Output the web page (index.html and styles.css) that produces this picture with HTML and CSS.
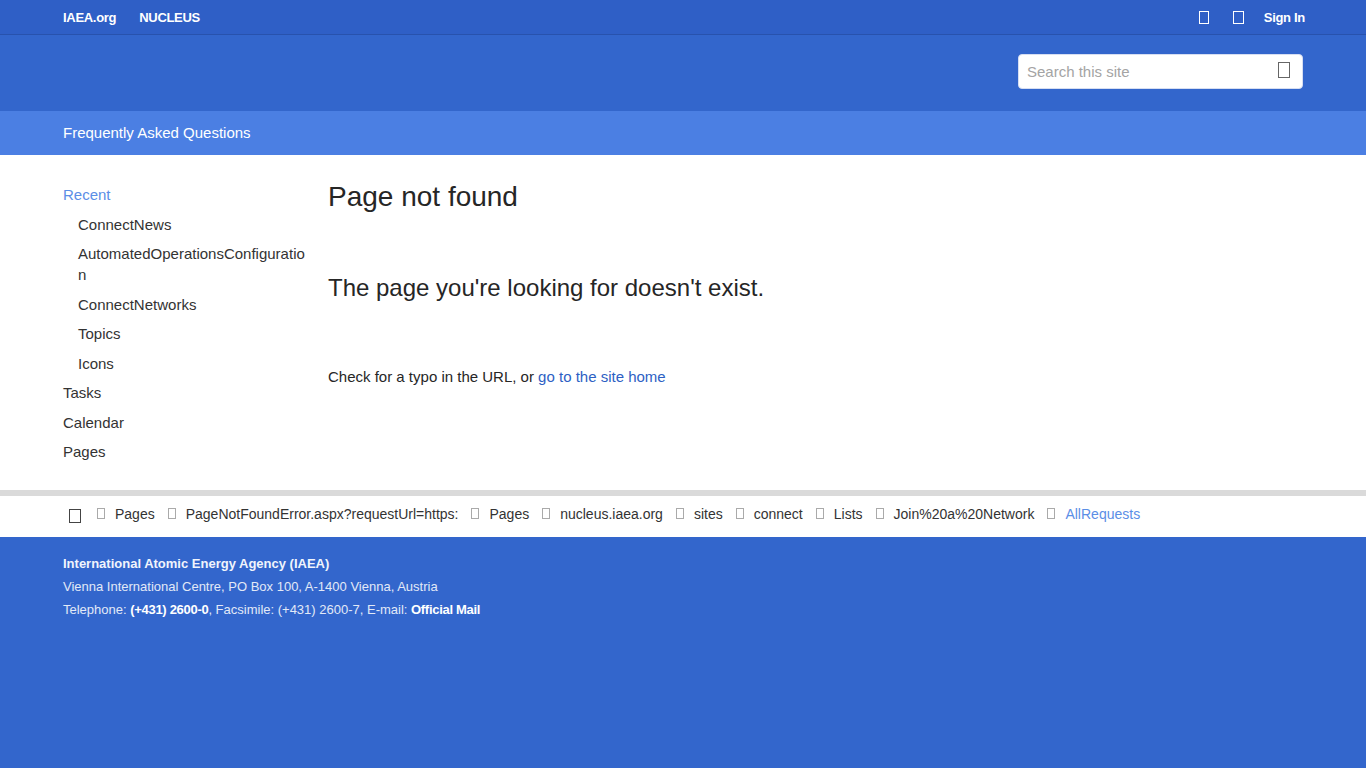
FILE: index.html
```html
<!DOCTYPE html>
<html lang="en">
<head>
<meta charset="utf-8">
<title>Page not found</title>
<link rel="stylesheet" href="styles.css">
</head>
<body>
<div class="topbar">
  <div class="container topbar-inner">
    <div class="toplinks">
      <a href="#">IAEA.org</a>
      <a href="#">NUCLEUS</a>
    </div>
    <div class="topright">
      <span class="tofu tofu-top"></span>
      <span class="tofu tofu-top tofu-wide"></span>
      <a href="#">Sign In</a>
    </div>
  </div>
</div>
<header class="header">
  <div class="container header-inner">
    <div class="search">
      <span class="placeholder">Search this site</span>
      <span class="tofu tofu-search"></span>
    </div>
  </div>
</header>
<nav class="navbar">
  <div class="container">
    <a href="#" class="navlink">Frequently Asked Questions</a>
  </div>
</nav>
<div class="content-wrap">
  <main class="container content">
    <aside class="sidebar">
      <a href="#" class="side-item active">Recent</a>
      <a href="#" class="side-item sub">ConnectNews</a>
      <a href="#" class="side-item sub">AutomatedOperationsConfiguration</a>
      <a href="#" class="side-item sub">ConnectNetworks</a>
      <a href="#" class="side-item sub">Topics</a>
      <a href="#" class="side-item sub">Icons</a>
      <a href="#" class="side-item">Tasks</a>
      <a href="#" class="side-item">Calendar</a>
      <a href="#" class="side-item">Pages</a>
    </aside>
    <section class="main">
      <h1>Page not found</h1>
      <h2>The page you're looking for doesn't exist.</h2>
      <p>Check for a typo in the URL, or <a href="#">go to the site home</a></p>
    </section>
  </main>
</div>
<div class="crumbs">
  <div class="container crumbs-inner">
    <span class="tofu tofu-home"></span>
    <span class="crumb first"><span class="tofu tofu-sep"></span>Pages</span>
    <span class="crumb"><span class="tofu tofu-sep"></span>PageNotFoundError.aspx?requestUrl=https:</span>
    <span class="crumb"><span class="tofu tofu-sep"></span>Pages</span>
    <span class="crumb"><span class="tofu tofu-sep"></span>nucleus.iaea.org</span>
    <span class="crumb"><span class="tofu tofu-sep"></span>sites</span>
    <span class="crumb"><span class="tofu tofu-sep"></span>connect</span>
    <span class="crumb"><span class="tofu tofu-sep"></span>Lists</span>
    <span class="crumb"><span class="tofu tofu-sep"></span>Join%20a%20Network</span>
    <span class="crumb current"><span class="tofu tofu-sep"></span>AllRequests</span>
  </div>
</div>
<footer class="footer">
  <div class="container">
    <div class="f-title">International Atomic Energy Agency (IAEA)</div>
    <div class="f-line">Vienna International Centre, PO Box 100, A-1400 Vienna, Austria</div>
    <div class="f-line">Telephone: <b>(+431) 2600-0</b>, Facsimile: (+431) 2600-7, E-mail: <b>Official Mail</b></div>
  </div>
</footer>
</body>
</html>
```
FILE: styles.css
```css
html, body {
  margin: 0;
  padding: 0;
}
body {
  font-family: "Liberation Sans", Arial, sans-serif;
  color: #333;
  background: #3366cc;
}
a { text-decoration: none; color: inherit; }
.container {
  width: 1240px;
  margin: 0 auto;
  box-sizing: border-box;
}
.tofu {
  display: inline-block;
  box-sizing: border-box;
  border: 1px solid currentColor;
}

/* top bar */
.topbar {
  background: #2f5fc6;
  border-bottom: 1px solid #2852ad;
  height: 35px;
  box-sizing: border-box;
}
.topbar-inner {
  display: flex;
  justify-content: space-between;
  align-items: center;
  height: 34px;
}
.toplinks {
  display: flex;
  gap: 23px;
}
.toplinks a, .topright a {
  color: #fff;
  font-weight: bold;
  font-size: 13px;
  letter-spacing: -0.3px;
}
.topright {
  display: flex;
  align-items: center;
  color: #fff;
  margin-right: -2px;
}
.tofu-top {
  width: 10px;
  height: 13px;
  margin-right: 24px;
  margin-left: 2px;
}
.tofu-wide { width: 11px; margin-right: 20px; margin-left: 0; }

/* header */
.header {
  background: #3366cc;
  height: 76px;
}
.header-inner {
  display: flex;
  justify-content: flex-end;
  padding-top: 19px;
}
.search {
  width: 285px;
  height: 35px;
  background: #fff;
  border-radius: 4px;
  display: flex;
  align-items: center;
  justify-content: space-between;
  padding: 0 12px 0 8px;
  box-sizing: border-box;
  border: 1px solid #d6def2;
}
.placeholder {
  color: #a4a4a4;
  font-size: 15px;
}
.tofu-search {
  width: 12px;
  height: 16px;
  color: #666;
  margin-top: -4px;
}

/* nav */
.navbar {
  background: #4b7fe3;
  height: 44px;
  display: flex;
  align-items: center;
}
.navlink {
  color: #fff;
  font-size: 15px;
}

/* content */
.content-wrap {
  background: #fff;
}
.content {
  display: flex;
  padding-top: 25px;
  height: 335px;
}
.sidebar {
  width: 243px;
  flex: none;
  display: flex;
  flex-direction: column;
}
.side-item {
  font-size: 15px;
  line-height: 21px;
  padding: 4px 0 4.5px;
  color: #333;
  word-break: break-all;
}
.side-item.sub { padding-left: 15px; }
.side-item.active { color: #5b8ee6; }
.main {
  padding-left: 22px;
}
.main h1 {
  font-weight: normal;
  font-size: 28px;
  line-height: 34px;
  margin: 0;
  color: #262626;
}
.main h2 {
  font-weight: normal;
  font-size: 24px;
  line-height: 30px;
  margin: 59px 0 0;
  color: #262626;
}
.main p {
  font-size: 15px;
  margin: 65px 0 0;
  color: #262626;
}
.main p a { color: #2d5fc4; }

/* breadcrumbs */
.crumbs {
  background: #fff;
  border-top: 6px solid #dadada;
  height: 47px;
  box-sizing: border-box;
}
.crumbs-inner {
  display: flex;
  align-items: center;
  height: 41px;
  padding-bottom: 6px;
  font-size: 14px;
  color: #333;
}
.tofu-home {
  width: 12px;
  height: 14px;
  color: #444;
  margin: 4px 0 0 6px;
}
.crumb {
  display: inline-flex;
  align-items: center;
  margin-left: 13px;
}
.tofu-sep {
  width: 8px;
  height: 11px;
  color: #aaa;
  margin-right: 10px;
}
.crumb.first { margin-left: 16px; }
.crumb.current { color: #5b8ee6; }

/* footer */
.footer {
  background: #3366cc;
  padding-top: 15px;
  height: 231px;
  box-sizing: border-box;
  color: #e2e9f7;
  font-size: 13px;
  line-height: 23px;
}
.f-title { font-weight: bold; color: #f0f4fc; }
.footer b { color: #fff; letter-spacing: -0.3px; }
```
